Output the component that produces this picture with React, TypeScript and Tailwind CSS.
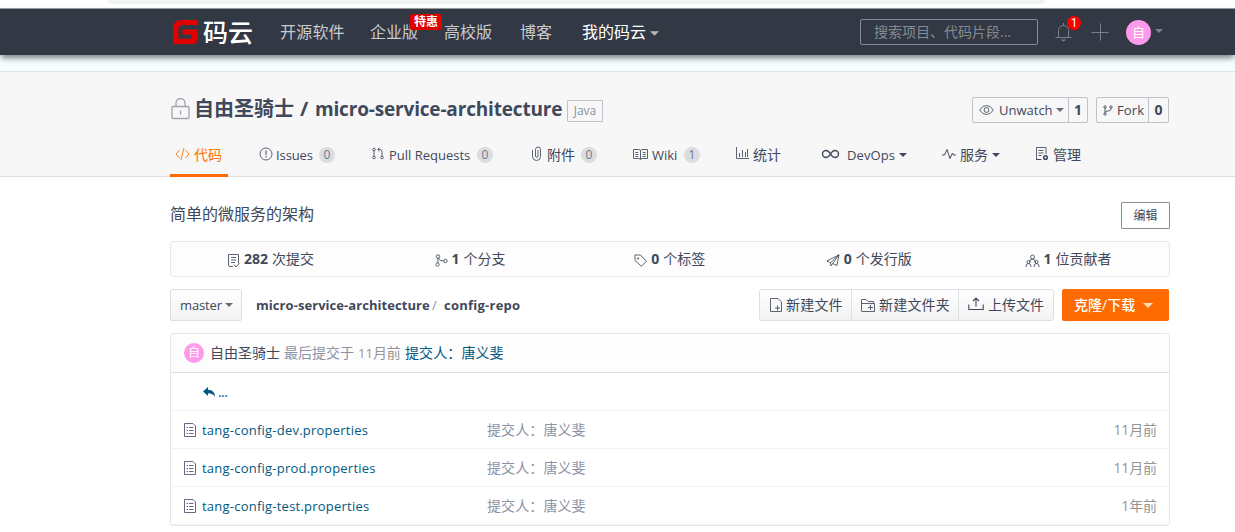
import React from "react";

type IconProps = { className?: string; children?: React.ReactNode; box?: string };

const Icon = ({ className = "", children, box = "0 0 16 16" }: IconProps) => (
  <svg viewBox={box} fill="none" stroke="currentColor" strokeWidth="0.85" className={"shrink-0 " + className}>
    {children}
  </svg>
);

const Caret = ({ className = "" }: { className?: string }) => (
  <svg viewBox="0 0 8 4" fill="currentColor" className={"h-[4px] w-[8px] shrink-0 " + className}>
    <path d="M0 0h8L4 4z" />
  </svg>
);

const Badge = ({ children }: { children: React.ReactNode }) => (
  <span className="ml-[6px] flex h-4 w-4 shrink-0 items-center justify-center rounded-full bg-[#dcdddf] text-[12px] text-[#6e7a94]">
    {children}
  </span>
);

const Logo = () => (
  <div className="flex h-[46px] w-[107px] shrink-0 items-center">
    <svg viewBox="0 0 25 24" className="mr-[5px] ml-[3px] h-[24px] w-[25px] shrink-0">
      <path
        d="M24.5 0v5H9.500Q5.500 5 5.500 9v9.800h13.200v-4.300H9.500v-5h15v9.500q0 5-5 5H0V8.500Q0 0 8.500 0z"
        fill="#e10000"
      />
    </svg>
    <span className="text-[25px] leading-[46px] font-medium text-white">码云</span>
  </div>
);

const NavBar = () => (
  <nav className="relative z-10 h-[47px] shrink-0 border-t border-[#99999c] bg-[#333845] shadow-[0_4px_6px_-1px_rgba(0,0,0,0.5)]">
    <div className="flex h-[46px] items-center pl-[170px] text-[16px] whitespace-nowrap text-[#c9cbcf]">
      <Logo />
      <span className="ml-[3px] w-[90px] shrink-0 tracking-[0.2px]">开源软件</span>
      <span className="relative w-[74px] shrink-0">
        企业版
        <span className="absolute top-[-8px] left-[40px] flex h-4 w-8 items-center justify-center rounded-[2px] bg-[#dd0000] text-[12px] font-bold text-white">
          特惠
        </span>
      </span>
      <span className="w-[76px] shrink-0">高校版</span>
      <span className="w-[62px] shrink-0">博客</span>
      <span className="flex w-[278px] shrink-0 items-center text-white">
        我的码云
        <Caret className="mt-[3px] ml-[4px] h-[5px] w-[9px] text-[#b4b7bc]" />
      </span>
      <div className="flex h-[26px] w-[178px] shrink-0 items-center rounded-[2px] border border-[#868b98] pl-[13px] text-[14px] text-[#878b93]">
        搜索项目、代码片段...
      </div>
      <span className="relative ml-[17px] text-[#7b808e]">
        <Icon className="h-[20px] w-[17px]" box="0 0 17 20">
          <path d="M3.500 15V8.500a5 5 0 0 1 10 0V15M.5 15.500h16M8.500 3.500V1" strokeWidth="1" />
          <path d="M5.500 17.500h6l-3 2z" fill="currentColor" stroke="none" />
        </Icon>
        <span className="absolute top-[-6px] left-[12px] flex h-[14px] w-[14px] items-center justify-center rounded-full bg-[#ff0000] font-[Roboto] text-[12px] text-white">
          1
        </span>
      </span>
      <Icon className="ml-[19px] h-[18px] w-[18px] text-[#7b808e]" box="0 0 18 18">
        <path d="M9.500.5v17M.5 9.500h17" strokeWidth="1" />
      </Icon>
      <span className="ml-[17px] flex h-[25px] w-[25px] shrink-0 items-center justify-center rounded-full bg-[#fe99eb] text-[13px] text-white">
        自
      </span>
      <Caret className="mb-[3px] ml-[4px] w-[7px] text-[#7b808e]" />
    </div>
  </nav>
);

const RepoTitle = () => (
  <div className="flex h-[32px] items-center">
    <Icon className="mr-[4px] mb-[3px] ml-[1px] h-[22px] w-[19px] text-[#a0a4b2]" box="0 0 19 22">
      <rect x="1" y="8.500" width="17" height="12" rx="1" strokeWidth="1.300" />
      <path d="M5 8.500V5a4.500 4.500 0 0 1 9 0v3.500M9.500 12.500v4" strokeWidth="1.300" />
    </Icon>
    <span className="mb-[2px] w-[106px] text-[20px] font-bold">自由圣骑士</span>
    <span className="mb-[2px] w-[15px] text-[20px] font-bold">/</span>
    <span className="mb-[2px] w-[252px] text-[19px] font-bold tracking-[-0.17px]">micro-service-architecture</span>
    <span className="mt-[2px] flex h-[22px] w-[36px] items-center justify-center rounded-[1px] border border-[#bfc1cd] text-[12px] text-[#8c92a4]">
      Java
    </span>
    <div className="ml-auto flex gap-[8px] pr-[1px] text-[13px]">
      <div className="flex h-[26px] w-[116px] items-center rounded-[2px] border border-[#bfc1cd]">
        <Icon className="ml-[6px] h-[12px] w-[15px]" box="0 0 15 12">
          <path d="M.7 6Q3.500 1.500 7.500 1.500T14.300 6Q11.500 10.500 7.500 10.500T.7 6z" />
          <circle cx="7.500" cy="6" r="2.400" />
        </Icon>
        <span className="ml-[5px] w-[57px]">Unwatch</span>
        <Caret className="w-[7px] text-[#666b78]" />
        <span className="ml-auto flex h-full w-[19px] items-center justify-center border-l border-[#bfc1cd] text-[14px] font-bold">1</span>
      </div>
      <div className="flex h-[26px] w-[73px] items-center rounded-[2px] border border-[#bfc1cd]">
        <Icon className="ml-[6px] h-[11px] w-[10px]" box="0 0 10 11">
          <circle cx="2" cy="2" r="1.200" />
          <circle cx="8" cy="2" r="1.200" />
          <circle cx="2" cy="9" r="1.200" />
          <path d="M2 3v5M8 3v1Q8 6 5 6T2 7.500" />
        </Icon>
        <span className="ml-[4px] tracking-[0.1px]">Fork</span>
        <span className="ml-auto flex h-full w-[20px] items-center justify-center border-l border-[#bfc1cd] text-[14px] font-bold">0</span>
      </div>
    </div>
  </div>
);

const Tabs = () => (
  <div className="grid h-[44px] grid-cols-[58px_113px_159px_102px_102px_86px_121px_93px_1fr] gap-x-0 text-[14px] whitespace-nowrap">
    <div className="flex items-center border-b-[3px] border-[#fe6b00] pl-[5px] text-[#fe7300]">
      <Icon className="mr-[4px] h-[14px] w-[15px]" box="0 0 15 14">
        <path d="M4.500 3L1 7l3.500 4M10.500 3L14 7l-3.500 4M9 1L6 13" />
      </Icon>
      <span className="mt-[2px]">代码</span>
    </div>
    <div className="flex items-center pb-[1px] pl-[31px]">
      <Icon className="mr-[3px] mb-[2px] h-[14px] w-[14px]" box="0 0 14 14">
        <circle cx="7" cy="7" r="6" />
        <path d="M7 3.500v4.500M7 9v1.500" strokeWidth="1" />
      </Icon>
      <span className="w-[37px] text-[13px] tracking-[-0.1px]">Issues</span>
      <Badge>0</Badge>
    </div>
    <div className="flex items-center pb-[1px] pl-[31px]">
      <Icon className="mr-[5px] mb-[2px] h-[13px] w-[12px]" box="0 0 12 13">
        <circle cx="2" cy="2.500" r="1.300" />
        <circle cx="2" cy="10.500" r="1.300" />
        <circle cx="10" cy="10.500" r="1.300" />
        <path d="M2 4v5M10 9V4.500Q10 2.500 8 2.500H6M7.500.7L5.700 2.500l1.800 1.800" />
      </Icon>
      <span className="w-[82px] text-[13px]">Pull Requests</span>
      <Badge>0</Badge>
    </div>
    <div className="flex items-center pb-[1px] pl-[31px]">
      <Icon className="mr-[5px] mb-[2px] h-[15px] w-[11px]" box="0 0 11 15">
        <path d="M1.500 4v6.500a4 4 0 0 0 8 0V3.500a2.500 2.500 0 0 0-5 0V10a1.200 1.200 0 0 0 2.500 0V4" />
      </Icon>
      <span className="w-[28px]">附件</span>
      <Badge>0</Badge>
    </div>
    <div className="flex items-center pb-[1px] pl-[31px]">
      <Icon className="mr-[4px] mb-[2px] h-[12px] w-[15px]" box="0 0 15 12">
        <path d="M.5 1.500h5.500l1.500 1 1.500-1h5.500v9H9l-1.500.8-1.500-.8H.5zM7.500 2.500v9M2.300 4.500h3M2.300 6.500h3M2.300 8.500h3M9.700 4.500h3M9.700 6.500h3M9.700 8.500h3" />
      </Icon>
      <span className="w-[26px] text-[13px]">Wiki</span>
      <Badge>1</Badge>
    </div>
    <div className="flex items-center pb-[1px] pl-[31px]">
      <Icon className="mr-[4px] mb-[2px] h-[13px] w-[14px]" box="0 0 14 13">
        <path d="M1.500 0v11.500H14M4.500 10V6M7.500 10V3M10.500 10V5M12.500 10V2" />
      </Icon>
      统计
    </div>
    <div className="flex items-center pb-[1px] pl-[31px]">
      <Icon className="mr-[7px] mb-[2px] h-[10px] w-[19px]" box="0 0 19 10">
        <path d="M9.500 5Q7.500 1.500 5 1.500a3.500 3.500 0 0 0 0 7Q7.500 8.500 9.500 5T14 1.500a3.500 3.500 0 0 1 0 7Q11.500 8.500 9.500 5z" strokeWidth="1.400" />
      </Icon>
      <span className="w-[52px] text-[13px] tracking-[0.1px]">DevOps</span>
      <Caret />
    </div>
    <div className="flex items-center pb-[1px] pl-[31px]">
      <Icon className="mr-[4px] mb-[2px] h-[12px] w-[14px]" box="0 0 14 12">
        <path d="M0 7h2.500L5 1.500l3 9L10.500 5l1 2H14" strokeWidth="1" />
      </Icon>
      <span className="w-[32px]">服务</span>
      <Caret className="w-[7px]" />
    </div>
    <div className="flex items-center pb-[1px] pl-[31px]">
      <Icon className="mr-[4px] mb-[2px] h-[15px] w-[14px]" box="0 0 14 15">
        <path d="M6.500 13.500h-5v-12h9.500V8M3.500 4.500h5M3.500 7h5M3.500 9.500h3M1 13.500h5" />
        <circle cx="10.500" cy="11.500" r="1.800" strokeWidth="1.500" />
      </Icon>
      管理
    </div>
  </div>
);

const Stat = ({ count, label, icon, className }: { count: string; label: string; icon: React.ReactNode; className: string }) => (
  <div className={"flex items-center " + className}>
    {icon}
    <span className="mr-[4px] text-[14px] font-bold">{count}</span>
    {label}
  </div>
);

const Stats = () => (
  <div className="mt-[12px] grid h-[36px] grid-cols-5 rounded-[3px] border border-[#e0e9ee] bg-[#fdfdfd] text-[14px]">
    <Stat
      className="pl-[56px]"
      count="282"
      label="次提交"
      icon={
        <Icon className="mt-[3px] mr-[4px] h-[15px] w-[13px]" box="0 0 13 15">
          <path d="M6 13.500H3q-1.500 0-1.500-1.500V1.500h10V10M4 4.500h5M4 7h5M4 9.500h4M7 11.500l2 2.500 3.500-4" />
        </Icon>
      }
    />
    <Stat
      className="pl-[64px]"
      count="1"
      label="个分支"
      icon={
        <Icon className="mt-[3px] mr-[4px] h-[13px] w-[13px]" box="0 0 13 13">
          <circle cx="3" cy="2.500" r="1.700" />
          <circle cx="2.500" cy="10.500" r="1.700" />
          <circle cx="10.500" cy="7" r="1.700" />
          <path d="M3 4v5M3 4q2 3 6 3" />
        </Icon>
      }
    />
    <Stat
      className="pl-[64px]"
      count="0"
      label="个标签"
      icon={
        <Icon className="mt-[3px] mr-[4px] h-[13px] w-[13px]" box="0 0 13 13">
          <path d="M1 1h5.500L12.300 7.300 7.500 12.300 1 6.500z" />
          <circle cx="4" cy="4.500" r=".7" />
        </Icon>
      }
    />
    <Stat
      className="pl-[56px]"
      count="0"
      label="个发行版"
      icon={
        <Icon className="mt-[3px] mr-[4px] h-[13px] w-[14px]" box="0 0 14 13">
          <path d="M13 .8L.8 7l3.700 1.700L13 .8 11 11.500 6.700 9.500 5 12 4.500 8.700M6.700 9.500L13 .8" />
        </Icon>
      }
    />
    <Stat
      className="pl-[56px]"
      count="1"
      label="位贡献者"
      icon={
        <Icon className="mt-[3px] mr-[3px] h-[14px] w-[15px]" box="0 0 15 14">
          <circle cx="7.500" cy="3" r="2" />
          <path d="M4.500 9q0-4 3-4t3 4M.8 13q0-3.500 2.700-3.500T6 13M9 13q0-3.500 2.500-3.500T14.200 13" />
          <circle cx="3.500" cy="8" r="1.500" />
          <circle cx="11.500" cy="8" r="1.500" />
        </Icon>
      }
    />
  </div>
);

const Toolbar = () => (
  <div className="mt-[12px] flex h-[32px] items-center text-[14px]">
    <div className="flex h-[32px] w-[72px] items-center rounded-[2px] border border-[#d9e0e7] bg-linear-to-b from-white to-[#f2f2f2] pl-[9px]">
      <span className="w-[45px] text-[13px] tracking-[-0.15px]">master</span>
      <Caret className="w-[7px] text-[#666b78]" />
    </div>
    <span className="ml-[14px] w-[176px] text-[13px] font-bold tracking-[0.06px]">micro-service-architecture</span>
    <span className="w-[12px] text-[13px] text-[#8c92a4]">/</span>
    <span className="text-[13px] font-bold tracking-[0.24px]">config-repo</span>
    <div className="ml-auto flex h-[32px] rounded-[3px] border border-[#d9e0e7] bg-linear-to-b from-white to-[#f2f2f2]">
      <div className="flex w-[92px] items-center border-r border-[#d9e0e7] pl-[10px]">
        <Icon className="mr-[4px] h-[14px] w-[12px]" box="0 0 12 14">
          <path d="M.5.5h7.500L11.500 4v9.500H.5zM7.500 7.500v5M5 10h5" />
        </Icon>
        <span className="tracking-[0.2px]">新建文件</span>
      </div>
      <div className="flex w-[107px] items-center border-r border-[#d9e0e7] pl-[9px]">
        <Icon className="mr-[4px] h-[13px] w-[14px]" box="0 0 14 13">
          <path d="M.5 12V.5H5l2 2h5.500v2M.5 12.500h13v-8H.5M9.500 6v5M7 8.500h5" />
        </Icon>
        <span className="tracking-[0.2px]">新建文件夹</span>
      </div>
      <div className="flex w-[94px] items-center pl-[9px]">
        <Icon className="mr-[4px] mb-[2px] h-[14px] w-[16px]" box="0 0 16 14">
          <path d="M.8 7.500v5h14.400v-5M8 9.500V1M5 4l3-3 3 3" strokeWidth="1.100" />
        </Icon>
        上传文件
      </div>
    </div>
    <div className="mr-[1px] ml-[8px] flex h-[32px] w-[107px] items-center rounded-[2px] bg-[#fe6b00] pl-[12px] font-medium text-white">
      <span className="w-[69px]">克隆/下载</span>
      <Caret className="h-[5px] w-[10px] text-[#ffd9bc]" />
    </div>
  </div>
);

const files = [
  { name: "tang-config-dev.properties", age: "11月前" },
  { name: "tang-config-prod.properties", age: "11月前" },
  { name: "tang-config-test.properties", age: "1年前" },
];

const FileTable = () => (
  <div className="mt-[12px] h-[193px] overflow-hidden rounded-[3px] border border-[#dfe8ed] text-[14px]">
    <div className="flex h-[39px] items-center border-b border-[#d5e1eb] bg-[#fdfdfd] pl-[13px]">
      <span className="mr-[6px] flex h-[20px] w-[20px] items-center justify-center rounded-full bg-[#fe99eb] text-[12px] text-white">
        自
      </span>
      <span className="w-[74px]">自由圣骑士</span>
      <span className="w-[74px] text-[#8c92a4]">最后提交于</span>
      <span className="w-[47px] text-[#959595]">
        <span className="text-[13px]">11</span>月前
      </span>
      <span className="tracking-[0.1px] text-[#005980]">提交人：唐义斐</span>
    </div>
    <div className="flex h-[38px] items-center border-b border-[#f1f3f5] pl-[32px] text-[#005980]">
      <svg viewBox="0 0 12 10" className="mr-[3px] h-[10px] w-[12px]" fill="currentColor">
        <path d="M0 4.500L5 0v2.700q7 .3 7 7.300-2-3.700-7-3.700V9z" />
      </svg>
      <span className="tracking-[-0.6px]">...</span>
    </div>
    {files.map((f) => (
      <div key={f.name} className="flex h-[38px] items-center border-b border-[#f1f3f5] pr-[12px] pl-[13px] text-[#8c92a4]">
        <Icon className="mr-[6px] h-[14px] w-[12px] text-[#6a6580]" box="0 0 12 14">
          <path d="M.5.5h8.500L11.500 3v10.500H.5zM2.500 4.500h1.500M5 4.500h4.500M2.500 7.500h1.500M5 7.500h4.500M2.500 10.500h1.500M5 10.500h4.500" strokeWidth="1" />
        </Icon>
        <span className="w-[285px] text-[13px] tracking-[0.23px] text-[#005980]">{f.name}</span>
        <span className="tracking-[0.1px]">提交人：唐义斐</span>
        <span className="ml-auto tracking-[-0.1px] text-[#959595]">{f.age}</span>
      </div>
    ))}
  </div>
);

export default function App() {
  return (
    <div className="flex h-[532px] w-[1235px] flex-col overflow-hidden bg-white font-['Open_Sans','Noto_Sans_CJK_SC',sans-serif] leading-[20px] text-[#40485b]">
      <div className="h-[8px] shrink-0 pl-[108px]">
        <div className="h-[4px] w-[937px] rounded-b-[10px] bg-[#f0f3f4]" />
      </div>
      <NavBar />
      <div className="h-[17px] shrink-0 border-b border-[#dfe5e5] bg-[#f5ffff]" />
      <header className="h-[105px] shrink-0 border-b border-[#dddddd] bg-[#f7f7f7] pt-[22px] pl-[170px]">
        <div className="w-[1000px]">
          <RepoTitle />
          <div className="mt-[7px]">
            <Tabs />
          </div>
        </div>
      </header>
      <main className="w-[1170px] pt-[25px] pl-[170px]">
        <div className="flex h-[27px] items-center justify-between text-[16px]">
          <span className="mb-[3px]">简单的微服务的架构</span>
          <span className="flex h-[27px] w-[49px] items-center justify-center rounded-[1px] border border-[#8c8c8c] text-[12px]">编辑</span>
        </div>
        <Stats />
        <Toolbar />
        <FileTable />
      </main>
    </div>
  );
}
